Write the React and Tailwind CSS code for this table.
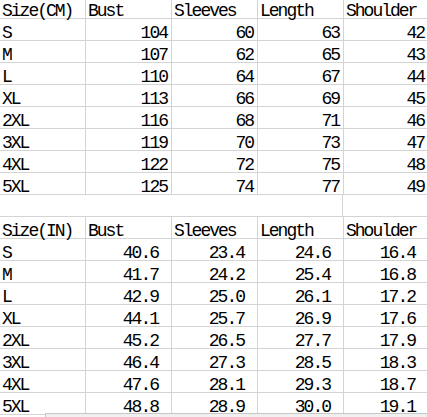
const cmRows = [
    ["S", "104", "60", "63", "42"],
    ["M", "107", "62", "65", "43"],
    ["L", "110", "64", "67", "44"],
    ["XL", "113", "66", "69", "45"],
    ["2XL", "116", "68", "71", "46"],
    ["3XL", "119", "70", "73", "47"],
    ["4XL", "122", "72", "75", "48"],
    ["5XL", "125", "74", "77", "49"],
];

const inRows = [
    ["S", "40.6", "23.4", "24.6", "16.4"],
    ["M", "41.7", "24.2", "25.4", "16.8"],
    ["L", "42.9", "25.0", "26.1", "17.2"],
    ["XL", "44.1", "25.7", "26.9", "17.6"],
    ["2XL", "45.2", "26.5", "27.7", "17.9"],
    ["3XL", "46.4", "27.3", "28.5", "18.3"],
    ["4XL", "47.6", "28.1", "29.3", "18.7"],
    ["5XL", "48.8", "28.9", "30.0", "19.1"],
];

const Cell = ({ children, right, pad = "pr-[4px]", last }) => (
    <div
        className={`flex shrink-0 items-end ${last ? "w-[84px]" : "w-[86px] border-r border-[#d4d4d4]"} ${
            right ? `justify-end ${pad}` : "pl-[2px]"
        }`}
    >
        <span className="whitespace-nowrap leading-[14px]">{children}</span>
    </div>
);

const Row = ({ cells, header, height = "h-[22px]", pad }) => (
    <div className={`flex ${height} border-b border-[#d4d4d4]`}>
        {cells.map((value, index) => (
            <Cell
                key={index}
                right={!header && index > 0}
                pad={pad}
                last={index === cells.length - 1}
            >
                {value}
            </Cell>
        ))}
    </div>
);

export default function App() {
    return (
        <div
            className="relative h-[417px] w-[427px] overflow-hidden bg-white text-[18px] tracking-[-2px] text-black"
            style={{ fontFamily: '"Liberation Mono", "Noto Sans CJK SC", monospace' }}
        >
            <Row cells={["Size(CM)", "Bust", "Sleeves", "Length", "Shoulder"]} header height="h-[19px]" />
            {cmRows.map((row) => (
                <Row key={row[0]} cells={row} />
            ))}
            <div className="flex h-[22px] border-b border-[#d4d4d4]">
                <div className="w-[343px] shrink-0 border-r border-[#d4d4d4]" />
            </div>
            <Row cells={["Size(IN)", "Bust", "Sleeves", "Length", "Shoulder"]} header />
            {inRows.map((row) => (
                <Row key={row[0]} cells={row} pad="pr-[13px]" />
            ))}
            <div className="absolute left-[45px] top-[413px] h-[4px] w-[382px] border-t border-l border-[#c8c8c8] bg-[#f0f0f0]" />
        </div>
    );
}
